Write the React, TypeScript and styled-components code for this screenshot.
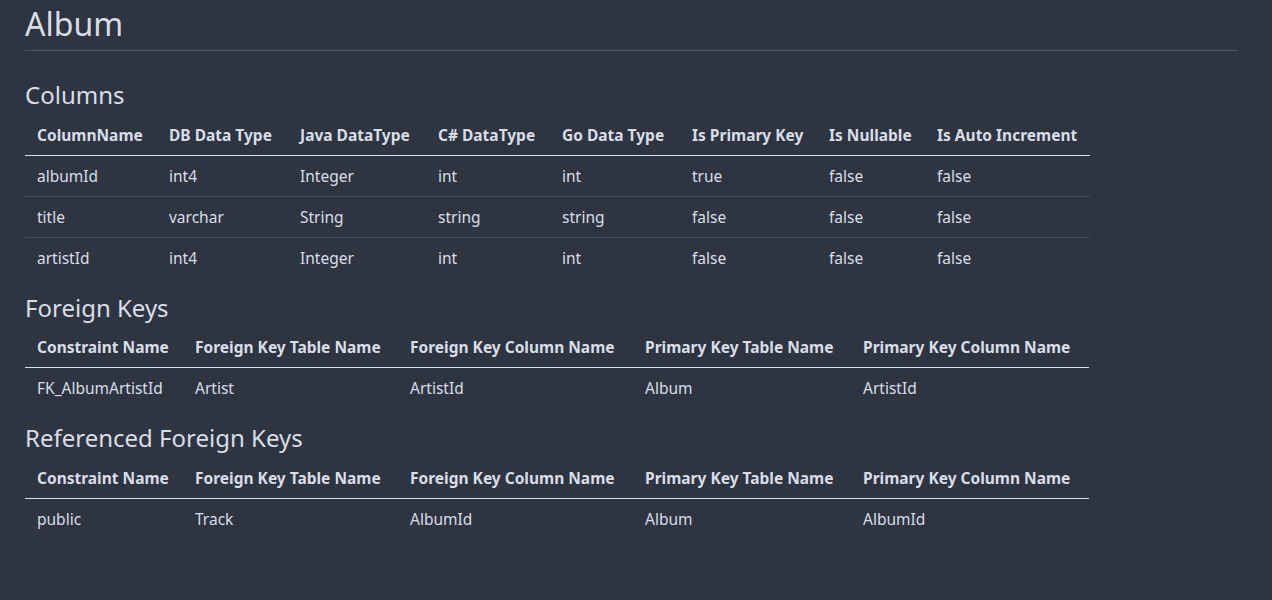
import React from 'react';
import styled, { createGlobalStyle } from 'styled-components';

const Global = createGlobalStyle`
    body {
        margin: 0;
        background: #2e3440;
        color: #d8dee9;
        font-family: "Noto Sans", "Open Sans", sans-serif;
    }
`;

const Page = styled.div`
    padding: 0 34px 20px 25px;
`;

const Title = styled.h1`
    margin: 0;
    padding-top: 2px;
    font-size: 32px;
    font-weight: 400;
    line-height: 44px;
    padding-bottom: 4px;
    border-bottom: 1px solid #4c566a;
`;

const Heading = styled.h2`
    margin: 0;
    font-size: 24px;
    font-weight: 400;
    line-height: 32px;
    padding: 4px 0 4px;
`;

const FirstHeading = styled(Heading)`
    padding-top: 28px;
`;

const Table = styled.table`
    border-collapse: collapse;
    font-size: 15.5px;
    margin-bottom: 10px;
`;

const Th = styled.th<{ $w: number }>`
    width: ${(p) => p.$w}px;
    box-sizing: border-box;
    text-align: left;
    font-weight: 700;
    padding: 0 12px;
    height: 40px;
    white-space: nowrap;
    border-bottom: 1px solid #d8dee9;
`;

const Td = styled.td`
    padding: 0 12px;
    height: 40px;
    white-space: nowrap;
    border-bottom: 1px solid #434c5e;
`;

const Row = styled.tr`
    &:last-child td {
        border-bottom: none;
    }
`;

type Col = [string, number];

const DataTable = ({ cols, rows }: { cols: Col[]; rows: string[][] }) => (
    <Table>
        <thead>
            <tr>
                {cols.map(([name, w]) => (
                    <Th key={name} $w={w}>
                        {name}
                    </Th>
                ))}
            </tr>
        </thead>
        <tbody>
            {rows.map((r, i) => (
                <Row key={i}>
                    {r.map((c, j) => (
                        <Td key={j}>{c}</Td>
                    ))}
                </Row>
            ))}
        </tbody>
    </Table>
);

const columnCols: Col[] = [
    ['ColumnName', 132],
    ['DB Data Type', 131],
    ['Java DataType', 138],
    ['C# DataType', 124],
    ['Go Data Type', 130],
    ['Is Primary Key', 137],
    ['Is Nullable', 108],
    ['Is Auto Increment', 165],
];

const fkCols: Col[] = [
    ['Constraint Name', 158],
    ['Foreign Key Table Name', 215],
    ['Foreign Key Column Name', 235],
    ['Primary Key Table Name', 218],
    ['Primary Key Column Name', 238],
];

export default function App() {
    return (
        <Page>
            <Global />
            <Title>Album</Title>
            <FirstHeading>Columns</FirstHeading>
            <DataTable
                cols={columnCols}
                rows={[
                    ['albumId', 'int4', 'Integer', 'int', 'int', 'true', 'false', 'false'],
                    ['title', 'varchar', 'String', 'string', 'string', 'false', 'false', 'false'],
                    ['artistId', 'int4', 'Integer', 'int', 'int', 'false', 'false', 'false'],
                ]}
            />
            <Heading>Foreign Keys</Heading>
            <DataTable
                cols={fkCols}
                rows={[['FK_AlbumArtistId', 'Artist', 'ArtistId', 'Album', 'ArtistId']]}
            />
            <Heading>Referenced Foreign Keys</Heading>
            <DataTable
                cols={fkCols}
                rows={[['public', 'Track', 'AlbumId', 'Album', 'AlbumId']]}
            />
        </Page>
    );
}
